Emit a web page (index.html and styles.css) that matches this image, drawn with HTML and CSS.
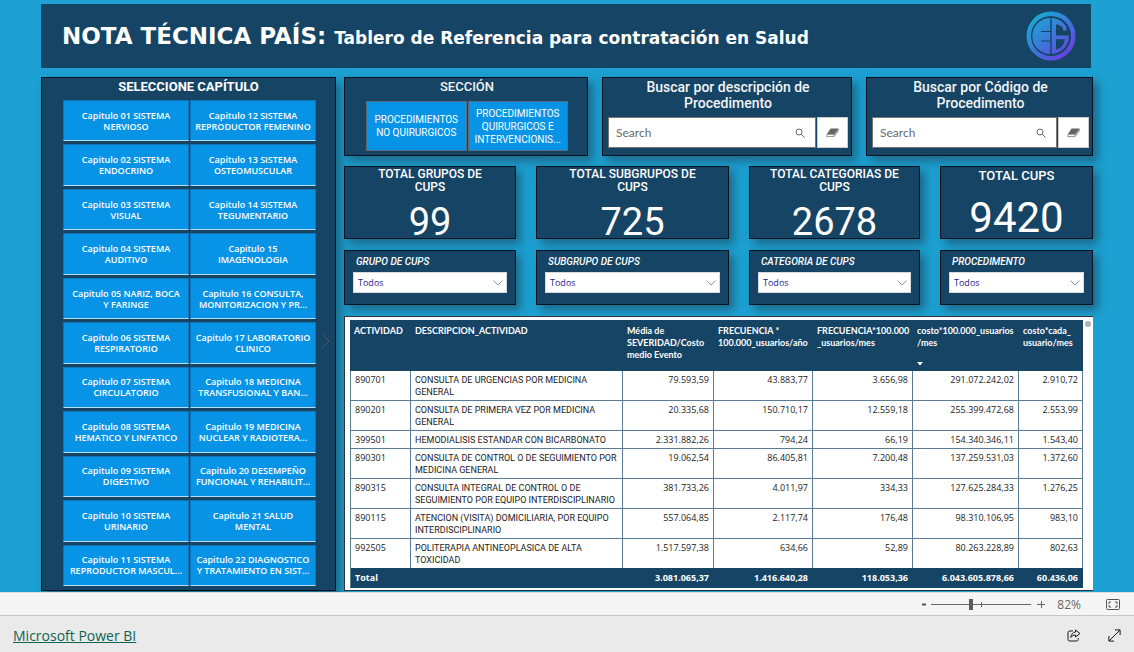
FILE: index.html
```html
<!DOCTYPE html>
<html lang="es">
<head>
<meta charset="utf-8">
<title>Nota Técnica País</title>
<meta name="viewport" content="width=device-width, initial-scale=1">
<link rel="stylesheet" href="styles.css">
</head>
<body>
<main class="report">
  <header class="banner">
    <h1 class="banner-title">NOTA TÉCNICA PAÍS: <span class="banner-sub">Tablero de Referencia para contratación en Salud</span></h1>
    <svg class="logo" viewBox="0 0 50 50" role="img" aria-label="EG">
      <defs>
        <linearGradient id="brand" x1="0.15" y1="0.1" x2="0.85" y2="0.9">
          <stop offset="0" stop-color="#19a9d3"/>
          <stop offset="0.5" stop-color="#3b78da"/>
          <stop offset="1" stop-color="#6a3fe0"/>
        </linearGradient>
      </defs>
      <g fill="url(#brand)">
        <path fill-rule="evenodd" d="M25 .5a24.500 24.500 0 1 0 0 49a24.500 24.500 0 1 0 0-49zM25 5a20 20 0 1 1 0 40a20 20 0 1 1 0-40zM24.300 7v13H15v1h9.300v8.500H15v1h9.300V43A18 18 0 0 1 24.300 7zM25.700 7c6.300.3 11.800 3.700 14.800 9v3.500H37v-2.500c-1.800-2.200-4-3.300-7-3.800v11.300h13c0 10-7 18-17.300 18.500zM30 28.300V38.500c5-.8 8-4.500 8.800-10.200z"/>
      </g>
    </svg>
  </header>

  <div class="board">
    <section class="card chapters">
      <h2 class="chapters-title">SELECCIONE CAPÍTULO</h2>
      <div class="chapters-body">
        <div class="chapter-grid">
          <button class="tile">Capitulo 01 SISTEMA<br>NERVIOSO</button>
          <button class="tile">Capitulo 02 SISTEMA<br>ENDOCRINO</button>
          <button class="tile">Capitulo 03 SISTEMA<br>VISUAL</button>
          <button class="tile">Capitulo 04 SISTEMA<br>AUDITIVO</button>
          <button class="tile">Capitulo 05 NARIZ, BOCA<br>Y FARINGE</button>
          <button class="tile">Capitulo 06 SISTEMA<br>RESPIRATORIO</button>
          <button class="tile">Capitulo 07 SISTEMA<br>CIRCULATORIO</button>
          <button class="tile">Capitulo 08 SISTEMA<br>HEMATICO Y LINFATICO</button>
          <button class="tile">Capitulo 09 SISTEMA<br>DIGESTIVO</button>
          <button class="tile">Capitulo 10 SISTEMA<br>URINARIO</button>
          <button class="tile">Capitulo 11 SISTEMA<br>REPRODUCTOR MASCUL...</button>
          <button class="tile">Capitulo 12 SISTEMA<br>REPRODUCTOR FEMENINO</button>
          <button class="tile">Capitulo 13 SISTEMA<br>OSTEOMUSCULAR</button>
          <button class="tile">Capitulo 14 SISTEMA<br>TEGUMENTARIO</button>
          <button class="tile">Capitulo 15<br>IMAGENOLOGIA</button>
          <button class="tile">Capitulo 16 CONSULTA,<br>MONITORIZACION Y PR...</button>
          <button class="tile">Capitulo 17 LABORATORIO<br>CLINICO</button>
          <button class="tile">Capitulo 18 MEDICINA<br>TRANSFUSIONAL Y BAN...</button>
          <button class="tile">Capitulo 19 MEDICINA<br>NUCLEAR Y RADIOTERA...</button>
          <button class="tile">Capitulo 20 DESEMPEÑO<br>FUNCIONAL Y REHABILIT...</button>
          <button class="tile">Capitulo 21 SALUD<br>MENTAL</button>
          <button class="tile">Capitulo 22 DIAGNOSTICO<br>Y TRATAMIENTO EN SIST...</button>
        </div>
        <button class="next" aria-label="Siguiente"><svg viewBox="0 0 8 14" width="8" height="14"><path d="M.5.5 7 7 .5 13.500" fill="none" stroke="#4d5b69"/></svg></button>
      </div>
    </section>

    <div class="column">
      <div class="row row-top">
        <section class="card section-card">
          <h2 class="heading">SECCIÓN</h2>
          <div class="section-tiles">
            <button class="section-tile">PROCEDIMIENTOS<br>NO QUIRURGICOS</button>
            <button class="section-tile">PROCEDIMIENTOS<br>QUIRURGICOS E<br>INTERVENCIONIS...</button>
          </div>
        </section>
        <section class="card search-card">
          <label class="heading heading-search" for="q-desc">Buscar por descripción de<br>Procedimento</label>
          <div class="search">
            <div class="search-box">
              <input id="q-desc" class="search-input" type="text" placeholder="Search">
              <svg class="lens" viewBox="0 0 10 10"><circle cx="4" cy="4" r="3" /><path d="M6.200 6.200 9.500 9.500"/></svg>
            </div>
            <button class="erase" aria-label="Borrar"><svg viewBox="0 0 13 10" width="13" height="10"><path d="M4.500.5h8L8.800 6H1z" fill="#666"/><path d="M1 6.400h7.300l-.6 2.200H.7zM8.600 6.200l3.800-5-.5 2.600-4 4.800" fill="#fff" stroke="#777" stroke-width=".8"/></svg></button>
          </div>
        </section>
        <section class="card search-card">
          <label class="heading heading-search" for="q-code">Buscar por Código de<br>Procedimento</label>
          <div class="search">
            <div class="search-box">
              <input id="q-code" class="search-input" type="text" placeholder="Search">
              <svg class="lens" viewBox="0 0 10 10"><circle cx="4" cy="4" r="3" /><path d="M6.200 6.200 9.500 9.500"/></svg>
            </div>
            <button class="erase" aria-label="Borrar"><svg viewBox="0 0 13 10" width="13" height="10"><path d="M4.500.5h8L8.800 6H1z" fill="#666"/><path d="M1 6.400h7.300l-.6 2.200H.7zM8.600 6.200l3.800-5-.5 2.600-4 4.800" fill="#fff" stroke="#777" stroke-width=".8"/></svg></button>
          </div>
        </section>
      </div>

      <div class="row row-four totals">
        <section class="card total"><h2 class="total-label">TOTAL GRUPOS DE<br>CUPS</h2><p class="total-value">99</p></section>
        <section class="card total"><h2 class="total-label">TOTAL SUBGRUPOS DE<br>CUPS</h2><p class="total-value">725</p></section>
        <section class="card total"><h2 class="total-label">TOTAL CATEGORIAS DE<br>CUPS</h2><p class="total-value">2678</p></section>
        <section class="card total total-main"><h2 class="total-label">TOTAL CUPS</h2><p class="total-value">9420</p></section>
      </div>

      <div class="row row-four filters">
        <section class="card filter"><label class="filter-label" for="f1">GRUPO DE CUPS</label><div class="picker"><select id="f1" class="picker-select"><option>Todos</option></select><svg class="caret" viewBox="0 0 10 6"><path d="M.5.5 5 5 9.500.5"/></svg></div></section>
        <section class="card filter"><label class="filter-label" for="f2">SUBGRUPO DE CUPS</label><div class="picker"><select id="f2" class="picker-select"><option>Todos</option></select><svg class="caret" viewBox="0 0 10 6"><path d="M.5.5 5 5 9.500.5"/></svg></div></section>
        <section class="card filter"><label class="filter-label" for="f3">CATEGORIA DE CUPS</label><div class="picker"><select id="f3" class="picker-select"><option>Todos</option></select><svg class="caret" viewBox="0 0 10 6"><path d="M.5.5 5 5 9.500.5"/></svg></div></section>
        <section class="card filter"><label class="filter-label" for="f4">PROCEDIMENTO</label><div class="picker"><select id="f4" class="picker-select"><option>Todos</option></select><svg class="caret" viewBox="0 0 10 6"><path d="M.5.5 5 5 9.500.5"/></svg></div></section>
      </div>

      <section class="table-card">
        <div class="table-scroll">
          <table class="grid">
            <colgroup><col class="c-code"><col class="c-desc"><col class="c-cost"><col class="c-year"><col class="c-month"><col class="c-total"><col class="c-user"></colgroup>
            <thead>
              <tr><th>ACTIVIDAD</th><th>DESCRIPCION_ACTIVIDAD</th><th>Média de<br>SEVERIDAD/Costo<br>medio Evento</th><th>FRECUENCIA *<br>100.000_usuarios/año</th><th>FRECUENCIA*100.000<br>_usuarios/mes</th><th>costo*100.000_usuarios<br>/mes<svg class="sort" viewBox="0 0 6 4"><path d="M0 0h6L3 3.500z" fill="#fff"/></svg></th><th>costo*cada_<br>usuario/mes</th></tr>
            </thead>
            <tbody>
              <tr><td>890701</td><td>CONSULTA DE URGENCIAS POR MEDICINA<br>GENERAL</td><td>79.593,59</td><td>43.883,77</td><td>3.656,98</td><td>291.072.242,02</td><td>2.910,72</td></tr>
              <tr><td>890201</td><td>CONSULTA DE PRIMERA VEZ POR MEDICINA<br>GENERAL</td><td>20.335,68</td><td>150.710,17</td><td>12.559,18</td><td>255.399.472,68</td><td>2.553,99</td></tr>
              <tr><td>399501</td><td>HEMODIALISIS ESTANDAR CON BICARBONATO</td><td>2.331.882,26</td><td>794,24</td><td>66,19</td><td>154.340.346,11</td><td>1.543,40</td></tr>
              <tr><td>890301</td><td>CONSULTA DE CONTROL O DE SEGUIMIENTO POR<br>MEDICINA GENERAL</td><td>19.062,54</td><td>86.405,81</td><td>7.200,48</td><td>137.259.531,03</td><td>1.372,60</td></tr>
              <tr><td>890315</td><td>CONSULTA INTEGRAL DE CONTROL O DE<br>SEGUIMIENTO POR EQUIPO INTERDISCIPLINARIO</td><td>381.733,26</td><td>4.011,97</td><td>334,33</td><td>127.625.284,33</td><td>1.276,25</td></tr>
              <tr><td>890115</td><td>ATENCION (VISITA) DOMICILIARIA, POR EQUIPO<br>INTERDISCIPLINARIO</td><td>557.064,85</td><td>2.117,74</td><td>176,48</td><td>98.310.106,95</td><td>983,10</td></tr>
              <tr><td>992505</td><td>POLITERAPIA ANTINEOPLASICA DE ALTA<br>TOXICIDAD</td><td>1.517.597,38</td><td>634,66</td><td>52,89</td><td>80.263.228,89</td><td>802,63</td></tr>
            </tbody>
            <tfoot>
              <tr><td>Total</td><td></td><td>3.081.065,37</td><td>1.416.640,28</td><td>118.053,36</td><td>6.043.605.878,66</td><td>60.436,06</td></tr>
            </tfoot>
          </table>
        </div>
        <div class="scroll-thumb"></div>
      </section>
    </div>
  </div>
</main>

<div class="zoombar">
  <button class="step" aria-label="Alejar"><svg viewBox="0 0 8 8" width="8" height="8"><path d="M2 4.500h4" stroke="#555" stroke-width="2"/></svg></button>
  <input class="zoom-range" type="range" min="0" max="100" value="39" aria-label="Zoom">
  <button class="step" aria-label="Acercar"><svg viewBox="0 0 8 8" width="8" height="8"><path d="M0 4.500h8M4.500 1v7" stroke="#666"/></svg></button>
  <span class="zoom-value">82%</span>
  <button class="fit" aria-label="Ajustar a la página"><svg viewBox="0 0 14 11" width="14" height="11" fill="none" stroke="#555"><rect x=".5" y=".5" width="13" height="10" rx="1"/><path d="M5 3H3v2M9 3h2v2M5 8H3V6M9 8h2V6"/></svg></button>
</div>
<footer class="footer">
  <a class="brand-link" href="#">Microsoft Power BI</a>
  <div class="footer-actions">
    <button class="icon-btn" aria-label="Compartir"><svg viewBox="0 0 14 13" width="14" height="13" fill="none" stroke="#1b1b1b" stroke-linejoin="round"><path d="M6 2H3C1.500 2 1 2.500 1 4v6.500C1 11.500 1.500 12 3 12h6.500c1.200 0 1.700-.6 1.700-1.700V9"/><path d="M8.500 1 13 4.500 8.500 8V6C6.300 6 5 6.800 3.800 8.500 4.200 5.300 5.700 3.300 8.500 3z"/></svg></button>
    <button class="icon-btn" aria-label="Pantalla completa"><svg viewBox="0 0 13 13" width="13" height="13" fill="none" stroke="#1b1b1b"><path d="M1 12 12 1M7 .9h5.100V6M.9 7v5.100H6"/></svg></button>
  </div>
</footer>
</body>
</html>
```

FILE: styles.css
```css
:root {
  --navy: #164465;
  --blue: #0894e6;
  --sky: #1ca1d2;
  --ui: "Open Sans", "Noto Sans", sans-serif;
  --narrow: Lato, "Open Sans", sans-serif;
  --din: Roboto, "Liberation Sans", sans-serif;
}
* { box-sizing: border-box; }
body {
  margin: 0;
  min-height: 100vh;
  display: flex;
  flex-direction: column;
  font-family: var(--ui);
  background: var(--sky);
}
h1, h2, p { margin: 0; }
button { font-family: inherit; cursor: pointer; }

.report {
  flex: 1;
  display: flex;
  flex-direction: column;
  gap: 9px;
  padding: 4px 41px 1px;
  overflow: hidden;
}
.banner {
  display: flex;
  align-items: center;
  justify-content: space-between;
  height: 64px;
  margin-right: 2px;
  padding: 0 15px 0 21px;
  background: var(--navy);
  color: #fff;
}
.banner-title {
  font: bold 23px "DejaVu Sans", Verdana, sans-serif;
}
.banner-sub { font-size: 17px; }
.logo { width: 50px; height: 50px; }

.board {
  flex: 1;
  display: grid;
  grid-template-columns: minmax(0, 295fr) minmax(0, 749fr);
  gap: 8px;
}
.card {
  background: var(--navy);
  border: 1px solid #05121d;
  box-shadow: 5px 5px 9px rgba(30, 65, 85, 0.6);
}

.chapters {
  display: flex;
  flex-direction: column;
  padding-bottom: 4px;
}
.chapters-title {
  font: bold 13px/18px var(--din);
  color: #fff;
  text-align: center;
  margin-bottom: 4px;
}
.chapters-body { flex: 1; display: flex; padding-left: 21px; }
.chapter-grid {
  flex: 1;
  display: grid;
  grid-template-rows: repeat(11, 1fr);
  grid-template-columns: 1fr 1fr;
  grid-auto-flow: column;
  gap: 3px 1px;
}
.tile {
  padding: 0;
  border: 1px solid #1173b4;
  border-bottom: 1px solid #b8ddf5;
  background: var(--blue);
  color: #fff;
  font-size: 9px;
  font-weight: 600;
  line-height: 11px;
  text-align: center;
  white-space: nowrap;
}
.next {
  width: 19px;
  padding: 0;
  border: 0;
  background: none;
}

.column {
  display: flex;
  flex-direction: column;
}
.row { display: grid; }
.row-top {
  grid-template-columns: minmax(0, 244fr) minmax(0, 250fr) minmax(0, 227fr);
  gap: 14px;
  margin-bottom: 10px;
}
.row-four {
  grid-template-columns: minmax(0, 172fr) minmax(0, 193fr) minmax(0, 171fr) minmax(0, 153fr);
  gap: 20px;
}
.heading {
  display: block;
  font: 500 13px/16px var(--din);
  color: #f1f4f6;
  text-align: center;
}
.heading-search { font-size: 14px; }
.section-card { padding: 1px 19px 4px 21px; }
.section-tiles {
  display: grid;
  grid-template-columns: 1fr 1fr;
  gap: 1px;
  margin-top: 6px;
}
.section-tile {
  height: 50px;
  padding: 0;
  border: 1px solid #566b7b;
  background: var(--blue);
  color: #fff;
  font: 10px/13px var(--din);
  white-space: nowrap;
}
.search-card { padding: 1px 3px 7px 5px; }
.search { display: flex; gap: 1px; margin-top: 6px; }
.search-box {
  flex: 1;
  min-width: 0;
  display: flex;
  align-items: center;
  padding-right: 10px;
  background: #fff;
  border: 1px solid #777;
}
.search-input {
  flex: 1;
  min-width: 0;
  padding: 0 7px;
  border: 0;
  background: none;
  font: 12px var(--narrow);
}
.search-input::placeholder { color: #6a6a6a; opacity: 1; }
.lens { width: 10px; height: 10px; fill: none; stroke: #666; }
.erase {
  width: 31px;
  height: 31px;
  padding: 0;
  background: #fff;
  border: 1px solid #ccc;
}

.totals { margin-bottom: 11px; }
.total {
  height: 73px;
  text-align: center;
  color: #fff;
}
.total-label { font: 500 12px/13px var(--din); padding-top: 1px; }
.total-value { font: 400 38px/44px var(--din); margin-top: 6px; }
.total-main .total-label { font-size: 13px; line-height: 16px; }
.total-main .total-value { font-size: 42px; line-height: 48px; margin-top: 10px; }

.filters { margin-bottom: 11px; }
.filter { height: 55px; padding: 3px 8px 0; }
.filter-label {
  display: block;
  padding: 0 3px;
  font: italic 500 10px/16px var(--din);
  color: #fff;
}
.picker { display: grid; align-items: center; margin-top: 2px; }
.picker-select {
  grid-area: 1 / 1;
  height: 21px;
  padding: 0 4px;
  appearance: none;
  border: 1px solid #d5dbe0;
  border-radius: 0;
  background: #fff;
  color: #1a1a8c;
  font: 9px var(--ui);
}
.caret {
  grid-area: 1 / 1;
  justify-self: end;
  width: 10px;
  height: 6px;
  margin-right: 4px;
  fill: none;
  stroke: #8a93c4;
  pointer-events: none;
}

.table-card {
  flex: 1;
  min-height: 274px;
  display: flex;
  gap: 2px;
  padding: 3px 2px 2px 5px;
  background: #fff;
  border: 1px solid #333;
  border-right: 0;
}
.table-scroll {
  flex: 1;
  overflow: hidden;
  contain: size;
}
.scroll-thumb {
  width: 6px;
  height: 6px;
  margin-top: 1px;
  border-radius: 3px;
  background: #b0b0b0;
}
.grid {
  width: 100%;
  table-layout: fixed;
  border-collapse: separate;
  border-spacing: 0;
  font-size: 9px;
  line-height: 12px;
  color: #222;
  white-space: nowrap;
}
.c-code { width: 61px; }
.c-desc { width: 212px; }
.c-cost { width: 91px; }
.c-year { width: 99px; }
.c-month { width: 100px; }
.c-total { width: 106px; }
.c-user { width: 64px; }
.grid th {
  height: 51px;
  padding: 5px 4px 0;
  background: var(--navy);
  color: #fff;
  font-family: var(--narrow);
  text-align: left;
  vertical-align: top;
}
.sort { display: block; width: 6px; height: 4px; margin-top: 13px; }
.grid td {
  padding: 3px 4px 2px;
  border-right: 1px solid #5a7b94;
  border-bottom: 1px solid #5a7b94;
  text-align: right;
  vertical-align: top;
}
.grid td:first-child { text-align: left; border-left: 1px solid #5a7b94; }
.grid td:nth-child(2) { text-align: left; font-family: var(--din); }
.grid tfoot td {
  position: sticky;
  bottom: 0;
  padding: 4px 4px 3px;
  border-color: var(--navy);
  background: var(--navy);
  color: #fff;
  font-weight: bold;
}

.zoombar {
  display: flex;
  align-items: center;
  justify-content: flex-end;
  height: 24px;
  padding-right: 14px;
  background: #f5f5f5;
  border-top: 1px solid #ddd;
  border-bottom: 1px solid #c8c8c8;
}
.step, .fit, .icon-btn {
  display: flex;
  padding: 0;
  border: 0;
  background: none;
}
.zoom-range {
  appearance: none;
  width: 100px;
  height: 11px;
  margin: 0 6px 0 3px;
  background:
    linear-gradient(#666, #666) 50% 50% / 1px 5px no-repeat,
    linear-gradient(#666, #666) 0 50% / 100% 1px no-repeat;
}
.zoom-range::-webkit-slider-thumb {
  appearance: none;
  width: 4px;
  height: 11px;
  background: #5c5c5c;
}
.zoom-value {
  margin: 0 25px 0 12px;
  font-size: 12px;
  color: #666;
}
.footer {
  display: flex;
  align-items: center;
  justify-content: space-between;
  height: 36px;
  padding: 3px 13px 0 13px;
  background: #eaeaea;
}
.brand-link { font-size: 14px; color: #0f6353; }
.footer-actions { display: flex; gap: 27px; }
```
